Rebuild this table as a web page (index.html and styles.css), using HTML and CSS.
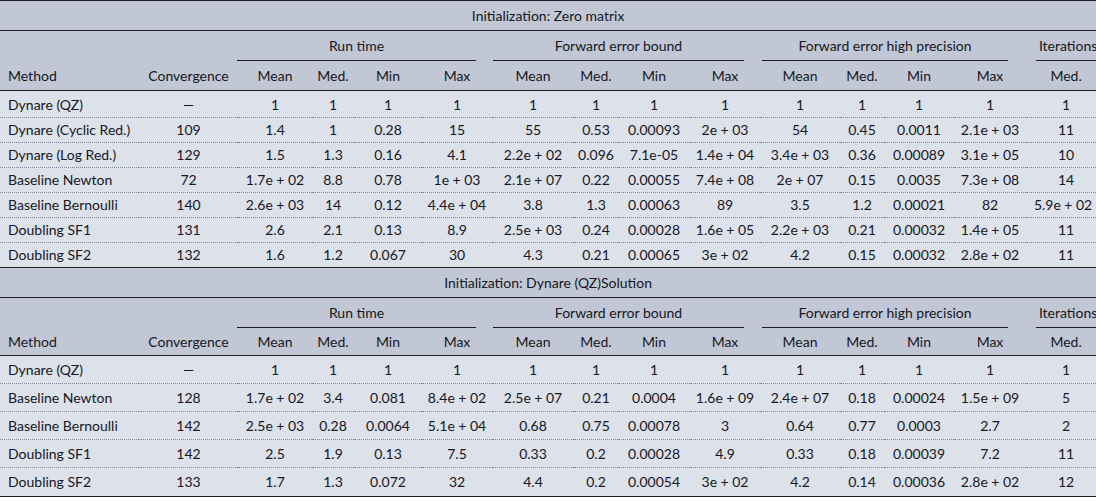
FILE: index.html
```html
<!DOCTYPE html>
<html>
<head>
<meta charset="utf-8">
<link rel="stylesheet" href="styles.css">
</head>
<body>
<table class="results">
<colgroup>
<col class="c-method"><col class="c-conv">
<col class="c74"><col class="c42"><col class="c68"><col class="c70">
<col class="c82"><col class="c44"><col class="c72"><col class="c70">
<col class="c80"><col class="c44"><col class="c70"><col class="c72">
<col class="c70">
</colgroup>
<tbody>
<tr class="title first"><td colspan="15">Initialization: Zero matrix</td></tr>
<tr class="spanner"><td></td><td></td>
<td colspan="4"><div class="rule r-rt">Run time</div></td>
<td colspan="4"><div class="rule r-feb">Forward error bound</div></td>
<td colspan="4"><div class="rule r-fehp">Forward error high precision</div></td>
<td><div class="rule r-it">Iterations</div></td></tr>
<tr class="head"><td class="m">Method</td><td>Convergence</td><td>Mean</td><td>Med.</td><td>Min</td><td>Max</td><td>Mean</td><td>Med.</td><td>Min</td><td>Max</td><td>Mean</td><td>Med.</td><td>Min</td><td>Max</td><td class="it">Med.</td></tr>
<tr class="d1 top"><td class="m">Dynare (QZ)</td><td>—</td><td>1</td><td>1</td><td>1</td><td>1</td><td>1</td><td>1</td><td>1</td><td>1</td><td>1</td><td>1</td><td>1</td><td>1</td><td class="it">1</td></tr>
<tr class="d1"><td class="m">Dynare (Cyclic Red.)</td><td>109</td><td>1.4</td><td>1</td><td>0.28</td><td>15</td><td>55</td><td>0.53</td><td>0.00093</td><td>2e&#8197;+&#8197;03</td><td>54</td><td>0.45</td><td>0.0011</td><td>2.1e&#8197;+&#8197;03</td><td class="it">11</td></tr>
<tr class="d1"><td class="m">Dynare (Log Red.)</td><td>129</td><td>1.5</td><td>1.3</td><td>0.16</td><td>4.1</td><td>2.2e&#8197;+&#8197;02</td><td>0.096</td><td>7.1e-05</td><td>1.4e&#8197;+&#8197;04</td><td>3.4e&#8197;+&#8197;03</td><td>0.36</td><td>0.00089</td><td>3.1e&#8197;+&#8197;05</td><td class="it">10</td></tr>
<tr class="d1"><td class="m">Baseline Newton</td><td>72</td><td>1.7e&#8197;+&#8197;02</td><td>8.8</td><td>0.78</td><td>1e&#8197;+&#8197;03</td><td>2.1e&#8197;+&#8197;07</td><td>0.22</td><td>0.00055</td><td>7.4e&#8197;+&#8197;08</td><td>2e&#8197;+&#8197;07</td><td>0.15</td><td>0.0035</td><td>7.3e&#8197;+&#8197;08</td><td class="it">14</td></tr>
<tr class="d1"><td class="m">Baseline Bernoulli</td><td>140</td><td>2.6e&#8197;+&#8197;03</td><td>14</td><td>0.12</td><td>4.4e&#8197;+&#8197;04</td><td>3.8</td><td>1.3</td><td>0.00063</td><td>89</td><td>3.5</td><td>1.2</td><td>0.00021</td><td>82</td><td class="it wide">5.9e&#8197;+&#8197;02</td></tr>
<tr class="d1"><td class="m">Doubling SF1</td><td>131</td><td>2.6</td><td>2.1</td><td>0.13</td><td>8.9</td><td>2.5e&#8197;+&#8197;03</td><td>0.24</td><td>0.00028</td><td>1.6e&#8197;+&#8197;05</td><td>2.2e&#8197;+&#8197;03</td><td>0.21</td><td>0.00032</td><td>1.4e&#8197;+&#8197;05</td><td class="it">11</td></tr>
<tr class="d1 last"><td class="m">Doubling SF2</td><td>132</td><td>1.6</td><td>1.2</td><td>0.067</td><td>30</td><td>4.3</td><td>0.21</td><td>0.00065</td><td>3e&#8197;+&#8197;02</td><td>4.2</td><td>0.15</td><td>0.00032</td><td>2.8e&#8197;+&#8197;02</td><td class="it">11</td></tr>

<tr class="title"><td colspan="15">Initialization: Dynare (QZ)Solution</td></tr>
<tr class="spanner"><td></td><td></td>
<td colspan="4"><div class="rule r-rt">Run time</div></td>
<td colspan="4"><div class="rule r-feb">Forward error bound</div></td>
<td colspan="4"><div class="rule r-fehp">Forward error high precision</div></td>
<td><div class="rule r-it">Iterations</div></td></tr>
<tr class="head head2"><td class="m">Method</td><td>Convergence</td><td>Mean</td><td>Med.</td><td>Min</td><td>Max</td><td>Mean</td><td>Med.</td><td>Min</td><td>Max</td><td>Mean</td><td>Med.</td><td>Min</td><td>Max</td><td class="it">Med.</td></tr>
<tr class="d2"><td class="m">Dynare (QZ)</td><td>—</td><td>1</td><td>1</td><td>1</td><td>1</td><td>1</td><td>1</td><td>1</td><td>1</td><td>1</td><td>1</td><td>1</td><td>1</td><td class="it">1</td></tr>
<tr class="d2"><td class="m">Baseline Newton</td><td>128</td><td>1.7e&#8197;+&#8197;02</td><td>3.4</td><td>0.081</td><td>8.4e&#8197;+&#8197;02</td><td>2.5e&#8197;+&#8197;07</td><td>0.21</td><td>0.0004</td><td>1.6e&#8197;+&#8197;09</td><td>2.4e&#8197;+&#8197;07</td><td>0.18</td><td>0.00024</td><td>1.5e&#8197;+&#8197;09</td><td class="it">5</td></tr>
<tr class="d2"><td class="m">Baseline Bernoulli</td><td>142</td><td>2.5e&#8197;+&#8197;03</td><td>0.28</td><td>0.0064</td><td>5.1e&#8197;+&#8197;04</td><td>0.68</td><td>0.75</td><td>0.00078</td><td>3</td><td>0.64</td><td>0.77</td><td>0.0003</td><td>2.7</td><td class="it">2</td></tr>
<tr class="d2"><td class="m">Doubling SF1</td><td>142</td><td>2.5</td><td>1.9</td><td>0.13</td><td>7.5</td><td>0.33</td><td>0.2</td><td>0.00028</td><td>4.9</td><td>0.33</td><td>0.18</td><td>0.00039</td><td>7.2</td><td class="it">11</td></tr>
<tr class="d2 last"><td class="m">Doubling SF2</td><td>133</td><td>1.7</td><td>1.3</td><td>0.072</td><td>32</td><td>4.4</td><td>0.2</td><td>0.00054</td><td>3e&#8197;+&#8197;02</td><td>4.2</td><td>0.14</td><td>0.00036</td><td>2.8e&#8197;+&#8197;02</td><td class="it">12</td></tr>
</tbody>
</table>
</body>
</html>
```

FILE: styles.css
```css
html, body {
  margin: 0;
  padding: 0;
  background: #ffffff;
  overflow: hidden;
}
body {
  width: 1096px;
  height: 501px;
}
.results {
  table-layout: fixed;
  width: 1096px;
  border-collapse: separate;
  border-spacing: 0;
  font-family: Lato, "Liberation Sans", sans-serif;
  font-size: 14px;
  color: #16171f;
  background: #dde1ea;
}
.results td {
  padding: 0;
  text-align: center;
  white-space: nowrap;
  overflow: visible;
}
.results td.m {
  text-align: left;
  padding-left: 8px;
}
.results td.it {
  padding-left: 10px;
}
.results td.it.wide {
  padding-left: 4px;
}
.c-method { width: 139px; }
.c-conv { width: 99px; }
.c74 { width: 74px; }
.c42 { width: 42px; }
.c68 { width: 68px; }
.c70 { width: 70px; }
.c82 { width: 82px; }
.c44 { width: 44px; }
.c72 { width: 72px; }
.c80 { width: 80px; }

.title td {
  background: #c1c7d4;
  line-height: 29px;
  border-bottom: 1px solid #1e1e22;
}
.title.first td {
  border-top: 1px solid #1e1e22;
  line-height: 29px;
}
.spanner td {
  background: #c1c7d4;
  vertical-align: bottom;
}
.rule {
  border-bottom: 1px solid #1e1e22;
  line-height: 29px;
}
.r-rt { margin: 0 16px 0 -1px; }
.r-feb { margin: 0 16px 0 1px; }
.r-fehp { margin: 0 18px 0 2px; }
.r-it { margin: 0 -4px 0 10px; }

.head td {
  background: #c1c7d4;
  line-height: 29px;
  border-bottom: 1px solid #1e1e22;
}
.head2 td {
  line-height: 27px;
}
.d1 td {
  line-height: 24px;
  border-bottom: 1px dotted #7c8497;
}
.d1.top td {
  line-height: 24px;
  padding-top: 2px;
}
.d2 td {
  line-height: 27px;
  border-bottom: 1px dotted #7c8497;
}
.d2.last td {
  line-height: 28px;
}
.d1.last td, .d2.last td {
  border-bottom: 1px solid #1e1e22;
}
```
